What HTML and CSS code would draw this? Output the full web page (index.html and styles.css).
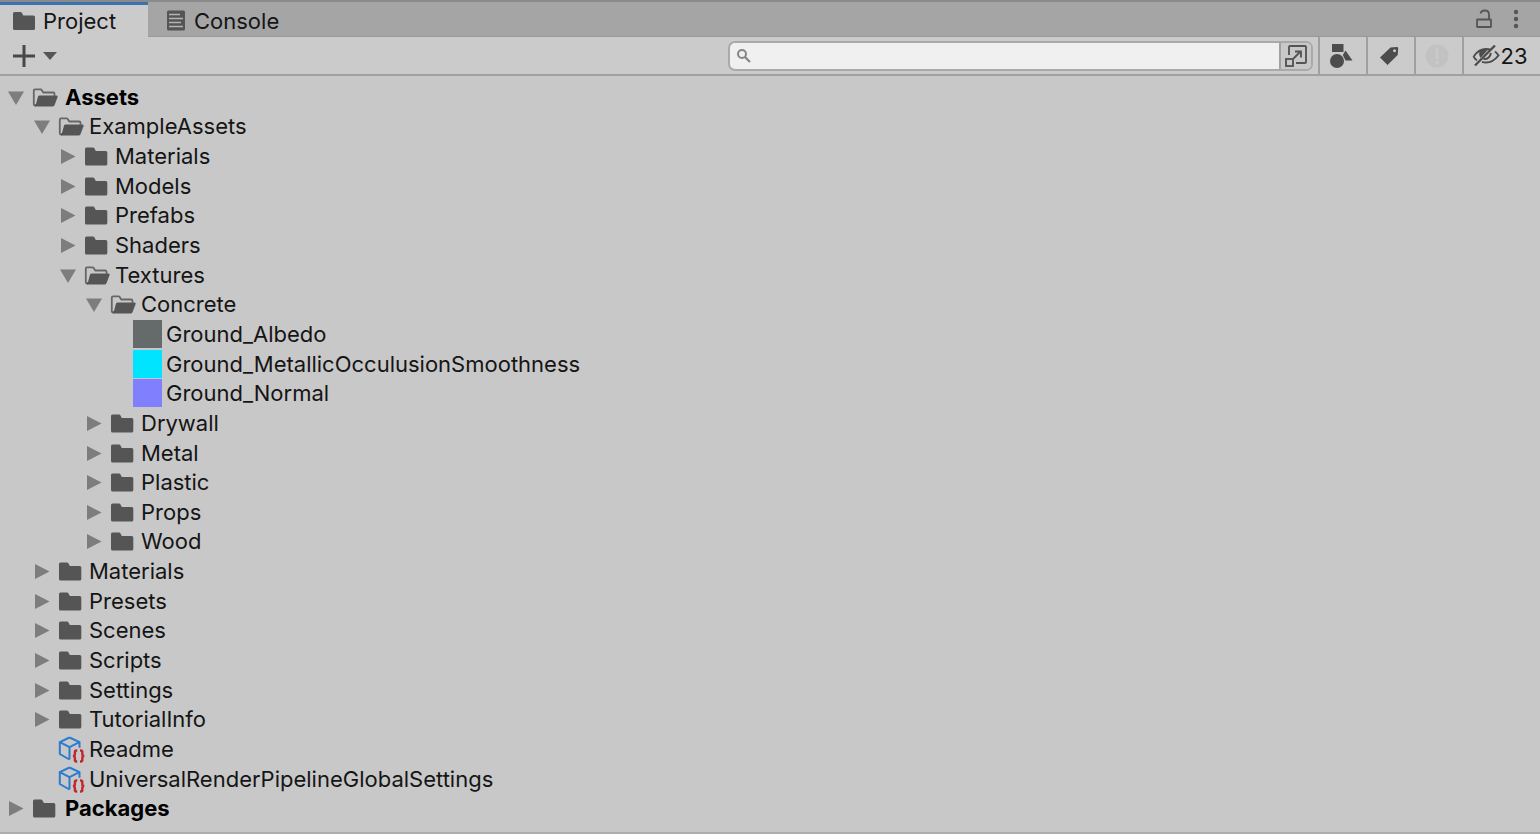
FILE: index.html
```html
<!DOCTYPE html>
<html lang="en">
<head>
    <meta charset="UTF-8">
    <meta name="viewport" content="width=device-width, initial-scale=1.0">
    <title>Project</title>
    <link rel="stylesheet" href="styles.css">
</head>
<body>
    <svg class="sprite" aria-hidden="true">
        <symbol id="folder" viewBox="0 0 32 24">
            <path fill="#555" d="M4 5q0-1.500 1.500-1.500h6.500q1 0 1.500 1l1.300 2.500h10q1.500 0 1.500 1.500v11.500q0 1.500-1.500 1.500h-19.300q-1.500 0-1.500-1.500z"/>
        </symbol>
        <symbol id="folder-open" viewBox="0 0 32 24">
            <path fill="none" stroke="#666" stroke-width="1.800" stroke-linejoin="round" d="M7 20.500H6q-1.200 0-1.200-1.200V5.500q0-1.200 1.200-1.200h5.500q.8 0 1.200.8l1.500 2.400h10q1.300 0 1.300 1.300v2"/>
            <path fill="#555" d="M10.500 10.500h17q1.600 0 1.100 1.500l-3 8q-.6 1.500-2.200 1.500H6.500q-1 0-.6-1l.6-1.500h.5l2-7.500q.4-1 1.500-1z"/>
        </symbol>
        <symbol id="asset" viewBox="0 0 32 28">
            <path fill="none" stroke="#2b7bd0" stroke-width="2" stroke-linejoin="round" d="M14.500 2.500l10 4.700v5.500M14.500 2.500L4.800 7.200v11.800l9.700 5.500M4.800 7.200l9.700 5L24.500 7.200M14.500 12.200v12.300"/>
            <path fill="none" stroke="#c1272d" stroke-width="2.400" d="M22.200 15.500h-.8q-1.500 0-1.500 1.400v2.400q0 1.700-2 1.700 2 0 2 1.700v2.400q0 1.400 1.500 1.400h.8M25 15.500h.8q1.500 0 1.500 1.400v2.400q0 1.700 2 1.700-2 0-2 1.700v2.400q0 1.400-1.500 1.400H25"/>
        </symbol>
        <symbol id="closed" viewBox="0 0 16 16">
            <path fill="#7d7d7d" d="M1 1L15.500 8.500L1 16z"/>
        </symbol>
        <symbol id="opened" viewBox="0 0 16 16">
            <path fill="#7d7d7d" d="M0 2.500h16L8 16z"/>
        </symbol>
    </svg>

    <div class="panel">
        <header class="tabs" role="tablist">
            <button class="tab active" role="tab" aria-selected="true">
                <svg width="22" height="20" viewBox="0 0 22 20"><path fill="#555" d="M0 2.500Q0 1 1.500 1h6q1 0 1.500 1l1.300 2.500h10.200q1.500 0 1.500 1.500v11.500q0 1.500-1.500 1.500h-19Q0 19 0 17.500z"/></svg>
                Project
            </button>
            <button class="tab" role="tab" aria-selected="false">
                <svg width="20" height="22" viewBox="0 0 20 22"><rect x="1" y="0.500" width="18" height="20" rx="1.500" fill="#555"/><path stroke="#b4b4b4" stroke-width="1.400" d="M3 4.500h11M3 8.500h14M3 12.500h12M3 16.500h14"/></svg>
                Console
            </button>
            <div class="tab-actions">
                <button class="plain" aria-label="Lock">
                    <svg width="18" height="20" viewBox="0 0 18 20" fill="none" stroke="#555" stroke-width="1.800"><rect x="2" y="10.500" width="14" height="7.500" rx="0.500"/><path d="M14 10.500V5.500q0-4-4-4H9.500q-3.200 0-4 3"/></svg>
                </button>
                <button class="plain" aria-label="More">
                    <svg width="6" height="20" viewBox="0 0 6 20" fill="#555"><circle cx="3" cy="3" r="2.200"/><circle cx="3" cy="10" r="2.200"/><circle cx="3" cy="17" r="2.200"/></svg>
                </button>
            </div>
        </header>

        <div class="toolbar">
            <button class="plain add" aria-label="Create">
                <svg width="22" height="22" viewBox="0 0 22 22"><path stroke="#484848" stroke-width="3" d="M11 0v22M0 11h22"/></svg>
                <svg width="14" height="8" viewBox="0 0 14 8"><path fill="#555" d="M0 0h14L7 8z"/></svg>
            </button>
            <div class="search">
                <svg width="14" height="14" viewBox="0 0 14 14" fill="none" stroke="#858585"><circle cx="5" cy="5" r="4" stroke-width="2"/><path stroke-width="2.200" d="M8 8l5 5"/></svg>
                <input type="text" aria-label="Search">
                <button class="plain popout" aria-label="Open in search">
                    <svg width="24" height="24" viewBox="0 0 24 24" fill="none" stroke="#555" stroke-width="1.900"><path d="M5 11V3q0-1 1-1h15q1 0 1 1v15q0 1-1 1h-9"/><rect x="2" y="15" width="7" height="7"/><path d="M9.500 14.500L16 8M11 7.500h6v6"/></svg>
                </button>
            </div>
            <button class="tool" aria-label="Search by type">
                <svg width="24" height="26" viewBox="0 0 24 26" fill="#4c4c4c"><path d="M3 1h11.500v8H3z"/><circle cx="8" cy="18" r="7"/><path d="M16.500 7.500L23.500 17.500H16.500L13.800 12z"/></svg>
            </button>
            <button class="tool" aria-label="Search by label">
                <svg width="20" height="20" viewBox="0 0 20 20"><path fill="#4c4c4c" fill-rule="evenodd" d="M11.500 1.500L18 1q1.200 0 1.200 1.200L18.700 9L8.500 19L1 11.500zM15.500 3.300a1.500 1.500 0 1 0 .1 0z"/></svg>
            </button>
            <button class="tool" aria-label="Search by import log" disabled>
                <svg width="24" height="24" viewBox="0 0 24 24"><circle cx="12" cy="12" r="11.500" fill="#c2c2c2"/><path stroke="#cacaca" stroke-width="2.500" d="M12 4v11M12 17v3"/></svg>
            </button>
            <button class="tool hidden-count" aria-label="Hidden packages: 23">
                <svg width="28" height="22" viewBox="0 0 28 22" fill="none" stroke="#4c4c4c"><path stroke-width="2" d="M2 11Q7 4 14 4q3 0 5 1M23 6.500q2 1.500 3.500 4Q21 17.500 14 17.500q-2 0-4-.6"/><path fill="#4c4c4c" stroke="none" d="M8 5.800Q11 4.200 16 4.500L8.500 13Q6 9 8 5.800z"/><path stroke-width="2" d="M11.500 14q6 .5 7.500-6M5 15.500Q2.500 14 1.500 11"/><path stroke-width="2.300" d="M3 20.500L23 0.500"/></svg>
                23
            </button>
        </div>

        <ul class="tree" role="tree">
            <li class="row level-0" role="treeitem" aria-level="1"><button class="toggle" aria-label="Collapse"><svg><use href="#opened"/></svg></button><svg class="icon"><use href="#folder-open"/></svg>Assets</li>
            <li class="row level-1" role="treeitem" aria-level="2"><button class="toggle" aria-label="Collapse"><svg><use href="#opened"/></svg></button><svg class="icon"><use href="#folder-open"/></svg>ExampleAssets</li>
            <li class="row level-2" role="treeitem" aria-level="3"><button class="toggle" aria-label="Expand"><svg><use href="#closed"/></svg></button><svg class="icon"><use href="#folder"/></svg>Materials</li>
            <li class="row level-2" role="treeitem" aria-level="3"><button class="toggle" aria-label="Expand"><svg><use href="#closed"/></svg></button><svg class="icon"><use href="#folder"/></svg>Models</li>
            <li class="row level-2" role="treeitem" aria-level="3"><button class="toggle" aria-label="Expand"><svg><use href="#closed"/></svg></button><svg class="icon"><use href="#folder"/></svg>Prefabs</li>
            <li class="row level-2" role="treeitem" aria-level="3"><button class="toggle" aria-label="Expand"><svg><use href="#closed"/></svg></button><svg class="icon"><use href="#folder"/></svg>Shaders</li>
            <li class="row level-2" role="treeitem" aria-level="3"><button class="toggle" aria-label="Collapse"><svg><use href="#opened"/></svg></button><svg class="icon"><use href="#folder-open"/></svg>Textures</li>
            <li class="row level-3" role="treeitem" aria-level="4"><button class="toggle" aria-label="Collapse"><svg><use href="#opened"/></svg></button><svg class="icon"><use href="#folder-open"/></svg>Concrete</li>
            <li class="row leaf level-4" role="treeitem" aria-level="5"><span class="thumb albedo"></span>Ground_Albedo</li>
            <li class="row leaf level-4" role="treeitem" aria-level="5"><span class="thumb metallic"></span>Ground_MetallicOcculusionSmoothness</li>
            <li class="row leaf level-4" role="treeitem" aria-level="5"><span class="thumb normal"></span>Ground_Normal</li>
            <li class="row level-3" role="treeitem" aria-level="4"><button class="toggle" aria-label="Expand"><svg><use href="#closed"/></svg></button><svg class="icon"><use href="#folder"/></svg>Drywall</li>
            <li class="row level-3" role="treeitem" aria-level="4"><button class="toggle" aria-label="Expand"><svg><use href="#closed"/></svg></button><svg class="icon"><use href="#folder"/></svg>Metal</li>
            <li class="row level-3" role="treeitem" aria-level="4"><button class="toggle" aria-label="Expand"><svg><use href="#closed"/></svg></button><svg class="icon"><use href="#folder"/></svg>Plastic</li>
            <li class="row level-3" role="treeitem" aria-level="4"><button class="toggle" aria-label="Expand"><svg><use href="#closed"/></svg></button><svg class="icon"><use href="#folder"/></svg>Props</li>
            <li class="row level-3" role="treeitem" aria-level="4"><button class="toggle" aria-label="Expand"><svg><use href="#closed"/></svg></button><svg class="icon"><use href="#folder"/></svg>Wood</li>
            <li class="row level-1" role="treeitem" aria-level="2"><button class="toggle" aria-label="Expand"><svg><use href="#closed"/></svg></button><svg class="icon"><use href="#folder"/></svg>Materials</li>
            <li class="row level-1" role="treeitem" aria-level="2"><button class="toggle" aria-label="Expand"><svg><use href="#closed"/></svg></button><svg class="icon"><use href="#folder"/></svg>Presets</li>
            <li class="row level-1" role="treeitem" aria-level="2"><button class="toggle" aria-label="Expand"><svg><use href="#closed"/></svg></button><svg class="icon"><use href="#folder"/></svg>Scenes</li>
            <li class="row level-1" role="treeitem" aria-level="2"><button class="toggle" aria-label="Expand"><svg><use href="#closed"/></svg></button><svg class="icon"><use href="#folder"/></svg>Scripts</li>
            <li class="row level-1" role="treeitem" aria-level="2"><button class="toggle" aria-label="Expand"><svg><use href="#closed"/></svg></button><svg class="icon"><use href="#folder"/></svg>Settings</li>
            <li class="row level-1" role="treeitem" aria-level="2"><button class="toggle" aria-label="Expand"><svg><use href="#closed"/></svg></button><svg class="icon"><use href="#folder"/></svg>TutorialInfo</li>
            <li class="row leaf level-1" role="treeitem" aria-level="2"><svg class="icon asset"><use href="#asset"/></svg>Readme</li>
            <li class="row leaf level-1" role="treeitem" aria-level="2"><svg class="icon asset"><use href="#asset"/></svg>UniversalRenderPipelineGlobalSettings</li>
            <li class="row level-0" role="treeitem" aria-level="1"><button class="toggle" aria-label="Expand"><svg><use href="#closed"/></svg></button><svg class="icon"><use href="#folder"/></svg>Packages</li>
        </ul>
    </div>
</body>
</html>
```
FILE: styles.css
```css
* {
    box-sizing: border-box;
}
body {
    margin: 0;
    font-family: Inter, "Liberation Sans", sans-serif;
    font-size: 22px;
    line-height: 28px;
    color: #151515;
    background-color: #c8c8c8;
}
button {
    font: inherit;
    color: inherit;
    border: none;
    background: none;
    padding: 0;
    cursor: pointer;
}
svg {
    display: block;
    flex-shrink: 0;
}
.sprite {
    position: absolute;
    width: 0;
    height: 0;
}
.panel {
    display: flex;
    flex-direction: column;
    min-height: 100vh;
    border-top: 2px solid #8a8a8a;
    border-bottom: 2px solid #adadad;
}

/* tabs */
.tabs {
    display: flex;
    height: 35px;
    background-color: #a5a5a5;
}
.tab {
    display: flex;
    align-items: center;
    gap: 8px;
    padding: 4px 16px 0 18px;
    border-bottom: 1px solid #999;
}
.tab.active {
    width: 148px;
    padding: 0 0 0 13px;
    background-color: #cbcbcb;
    border-top: 3px solid #3a72b0;
    border-bottom: none;
}
.tab-actions {
    display: flex;
    flex: 1;
    justify-content: flex-end;
    align-items: center;
    gap: 20px;
    padding-right: 21px;
    border-bottom: 1px solid #999;
}

/* toolbar */
.toolbar {
    display: flex;
    align-items: center;
    height: 39px;
    background-color: #cbcbcb;
    border-bottom: 2px solid #a0a0a0;
}
.add {
    display: flex;
    align-items: center;
    gap: 8px;
    margin-left: 13px;
}
.search {
    display: flex;
    align-items: center;
    width: 38%;
    height: 30px;
    margin-left: auto;
    margin-right: 5px;
    padding-left: 7px;
    border: 2px solid #a9a9a9;
    border-radius: 7px;
    background-color: #f0f0f0;
    overflow: hidden;
}
.search input {
    flex: 1;
    min-width: 0;
    height: 26px;
    padding: 0 8px;
    border: none;
    outline: none;
    background: none;
    font: inherit;
}
.popout {
    display: flex;
    align-items: center;
    justify-content: center;
    width: 32px;
    height: 26px;
    background-color: #c8c8c8;
    border-left: 2px solid #a0a0a0;
}
.tool {
    display: flex;
    align-items: center;
    justify-content: center;
    width: 48px;
    height: 37px;
    padding-right: 4px;
    border-left: 2px solid #a0a0a0;
}
.hidden-count {
    width: 78px;
}

/* asset tree, the rows share the height that is left */
.tree {
    display: flex;
    flex-direction: column;
    flex: 1;
    margin: 0;
    padding: 6px 0 9px;
    list-style: none;
}
.row {
    display: flex;
    flex: 1;
    align-items: center;
    min-height: 28px;
    padding-left: 8px;
    white-space: nowrap;
}
.toggle,
.toggle svg {
    width: 16px;
    height: 16px;
}
.icon {
    width: 32px;
    height: 24px;
    margin-left: 5px;
    margin-right: 2px;
}
.icon.asset {
    height: 28px;
}
.thumb {
    width: 29px;
    height: 28px;
    margin-right: 4px;
}
.leaf .icon,
.leaf .thumb {
    margin-left: 21px;
}
.level-0 {
    font-weight: bold;
    color: #000;
}
.level-0 .icon {
    margin-right: 4px;
}
.level-1 {
    padding-left: 34px;
}
.level-2 {
    padding-left: 60px;
}
.level-3 {
    padding-left: 86px;
}
.level-4 {
    padding-left: 112px;
}
.albedo {
    background-color: #656a6b;
}
.metallic {
    background-color: #00e4ff;
}
.normal {
    background-color: #8080ff;
}
```
